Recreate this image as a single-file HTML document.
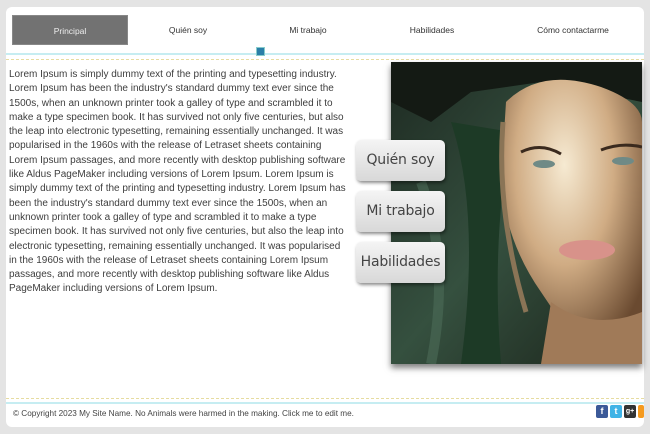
<!DOCTYPE html>
<html><head><meta charset="utf-8">
<style>
*{margin:0;padding:0;box-sizing:border-box}
body{width:650px;height:434px;background:#e4e4e4;font-family:"Liberation Sans",Arial,sans-serif;position:relative;overflow:hidden}
.card{position:absolute;left:6px;top:7px;width:638px;height:420px;background:#fff;border-radius:6px}
.nav{position:absolute;top:15px;height:30px;font-size:8.5px;color:#333;line-height:30px;text-align:center}
.act{background:#727272;color:#eee;left:12px;width:116px;border:1px solid #888}
.bl{position:absolute;left:6px;width:638px;height:2px;background:#c6edf2}
.dl{position:absolute;left:6px;width:638px;border-top:1px dashed #e6dca0}
.txt{position:absolute;left:9px;top:68px;font-size:10px;line-height:14.3px;color:#3e3e3e;white-space:nowrap}
.btn{position:absolute;left:356px;width:89px;height:41px;border-radius:5px;background:linear-gradient(#f4f4f4,#d8d8d8);box-shadow:1px 2px 3px rgba(0,0,0,.45);font-family:"DejaVu Sans",sans-serif;font-size:14px;color:#444;text-align:center;line-height:40px;letter-spacing:-.2px}
.foot{position:absolute;left:13px;top:409px;font-size:8.2px;color:#444}
.soc{position:absolute;top:405px;width:12px;height:13px;border-radius:2px;color:#fff;font-size:9px;font-weight:bold;text-align:center;line-height:13px}
</style></head><body>
<div class="card"></div>
<div class="nav act">Principal</div>
<div class="nav" style="left:140px;width:96px">Quién soy</div>
<div class="nav" style="left:260px;width:96px">Mi trabajo</div>
<div class="nav" style="left:384px;width:96px">Habilidades</div>
<div class="nav" style="left:520px;width:106px">Cómo contactarme</div>
<div class="bl" style="top:53px"></div>
<div style="position:absolute;left:256px;top:47px;width:9px;height:9px;background:#2a7fa8;border:1px solid #8cc"></div>
<div class="dl" style="top:59px"></div>
<div class="txt">Lorem Ipsum is simply dummy text of the printing and typesetting industry.<br>Lorem Ipsum has been the industry's standard dummy text ever since the<br>1500s, when an unknown printer took a galley of type and scrambled it to<br>make a type specimen book. It has survived not only five centuries, but also<br>the leap into electronic typesetting, remaining essentially unchanged. It was<br>popularised in the 1960s with the release of Letraset sheets containing<br>Lorem Ipsum passages, and more recently with desktop publishing software<br>like Aldus PageMaker including versions of Lorem Ipsum. Lorem Ipsum is<br>simply dummy text of the printing and typesetting industry. Lorem Ipsum has<br>been the industry's standard dummy text ever since the 1500s, when an<br>unknown printer took a galley of type and scrambled it to make a type<br>specimen book. It has survived not only five centuries, but also the leap into<br>electronic typesetting, remaining essentially unchanged. It was popularised<br>in the 1960s with the release of Letraset sheets containing Lorem Ipsum<br>passages, and more recently with desktop publishing software like Aldus<br>PageMaker including versions of Lorem Ipsum.</div>
<svg style="position:absolute;left:391px;top:62px;box-shadow:0 4px 6px rgba(0,0,0,.5)" width="251" height="302" viewBox="0 0 251 302">
<defs>
<radialGradient id="sk" cx="0.45" cy="0.3" r="0.7"><stop offset="0" stop-color="#f6ead2"/><stop offset="0.5" stop-color="#d0ac84"/><stop offset="1" stop-color="#6a4a30"/></radialGradient>
<linearGradient id="bg" x1="0" y1="0" x2="1" y2="1"><stop offset="0" stop-color="#1e2a22"/><stop offset="0.5" stop-color="#35503f"/><stop offset="1" stop-color="#1a2219"/></linearGradient>
</defs>
<rect width="251" height="302" fill="url(#bg)"/>
<path d="M0 0H251V40L150 20L80 30L40 60L0 40Z" fill="#141a14"/>
<path d="M60 60Q90 150 70 302H110Q100 180 120 70Z" fill="#1d3a26"/>
<path d="M30 120Q60 200 40 302" stroke="#4d6d58" stroke-width="10" fill="none" opacity=".6"/>
<path d="M115 40Q150 5 210 25Q251 40 251 60V302H200Q170 260 150 230Q115 180 110 120Z" fill="url(#sk)"/>
<path d="M160 240Q200 270 251 250V302H150Z" fill="#a07a58"/>
<path d="M112 60Q105 150 135 250" stroke="#8a7456" stroke-width="5" fill="none"/>
<path d="M130 90Q150 80 170 92" stroke="#3a2a1e" stroke-width="3" fill="none"/>
<path d="M210 88Q230 80 251 85" stroke="#3a2a1e" stroke-width="3" fill="none"/>
<ellipse cx="153" cy="102" rx="11" ry="4" fill="#6f8a86"/>
<ellipse cx="232" cy="99" rx="11" ry="4" fill="#6f8a86"/>
<ellipse cx="196" cy="188" rx="28" ry="10" fill="#d8928a"/>
</svg>
<div class="btn" style="top:140px">Quién soy</div>
<div class="btn" style="top:191px">Mi trabajo</div>
<div class="btn" style="top:242px">Habilidades</div>
<div class="dl" style="top:398px"></div>
<div class="bl" style="top:402px"></div>
<div class="foot">© Copyright 2023 My Site Name. No Animals were harmed in the making. Click me to edit me.</div>
<div class="soc" style="left:596px;background:#3b5998">f</div>
<div class="soc" style="left:610px;background:#3fb3e6">t</div>
<div class="soc" style="left:624px;background:#333;font-size:7px">g+</div>
<div class="soc" style="left:638px;width:6px;background:#f59a1e"></div>
</body></html>
